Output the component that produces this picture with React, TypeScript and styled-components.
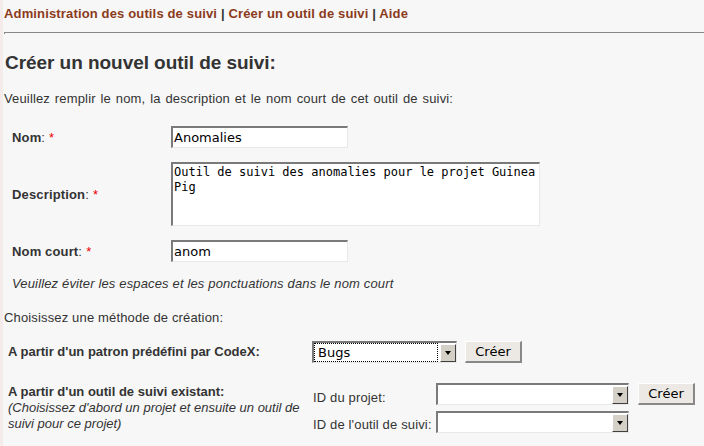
import React from "react";
import styled, { createGlobalStyle } from "styled-components";

const Global = createGlobalStyle`
  html, body { margin: 0; padding: 0; background: #f7f7f7; }
  body { font-family: "Liberation Sans", Arial, sans-serif; color: #333; letter-spacing: 0.15px; }
`;

const Page = styled.div`
  width: 704px;
  height: 446px;
  overflow: hidden;
  box-sizing: border-box;
  border-left: 3px solid #f5ebeb;
  padding: 4px 0 0 1px;
`;

const Nav = styled.div`
  font-size: 13px;
  font-weight: bold;
  color: #333;
  height: 20px;
  line-height: 20px;
`;

const NavLink = styled.a`
  color: #8b3b1c;
  text-decoration: none;
`;

const Rule = styled.hr`
  margin: 8px 0 0 0;
  border: 0;
  border-top: 1px solid #888;
  border-left: 1px solid #888;
  height: 1px;
`;

const Title = styled.h2`
  margin: 18px 0 0 1px;
  font-size: 19px;
  font-weight: bold;
  color: #333;
  line-height: 22px;
  letter-spacing: -0.05px;
`;

const Para = styled.p<{ $top: number; $wide?: boolean }>`
  margin: ${(p) => p.$top}px 0 0 0;
  font-size: 13px;
  line-height: 16px;
  color: #333;
  word-spacing: ${(p) => (p.$wide ? "1.1px" : "0")};
`;

const FormGrid = styled.div`
  display: grid;
  grid-template-columns: 159px auto;
  margin: 19px 0 0 8px;
  row-gap: 14px;
  align-items: center;
`;

const Label = styled.div`
  font-size: 13px;
  font-weight: bold;
  color: #333;
`;

const Req = styled.span`
  color: #e00;
  font-weight: normal;
  margin-left: 4px;
`;

const Colon = styled.span`
  font-weight: normal;
`;

const inset = `
  box-sizing: border-box;
  background: #fff;
  border-top: 2px solid #7a7a7a;
  border-left: 2px solid #7a7a7a;
  border-right: 1px solid #e8e8e8;
  border-bottom: 1px solid #e8e8e8;
  letter-spacing: 0;
`;

const TextBox = styled.div`
  ${inset}
  width: 177px;
  height: 22px;
  padding: 1px 0 0 1px;
  font-family: "DejaVu Sans", sans-serif;
  font-size: 13px;
  line-height: 17px;
  color: #000;
`;

const TextArea = styled.div`
  ${inset}
  width: 369px;
  height: 64px;
  padding: 1px 0 0 1px;
  font-family: "DejaVu Sans Mono", monospace;
  font-size: 12px;
  line-height: 15px;
  color: #000;
`;

const Note = styled.div`
  margin: 14px 0 0 8px;
  font-size: 13px;
  font-style: italic;
  color: #333;
`;

const MethodGrid = styled.div`
  display: grid;
  grid-template-columns: 304px auto;
  margin: 15px 0 0 4px;
  row-gap: 20px;
  align-items: center;
`;

const MethodLabel = styled.div`
  font-size: 13px;
  line-height: 16px;
  color: #333;
  letter-spacing: 0;
  b { font-weight: bold; }
  i { font-style: italic; }
`;

const Row = styled.div<{ $gap: number }>`
  display: flex;
  align-items: flex-start;
  gap: ${(p) => p.$gap}px;
`;

const SelectBox = styled.div<{ $w: number }>`
  ${inset}
  width: ${(p) => p.$w}px;
  height: 22px;
  display: flex;
  align-items: stretch;
  font-family: "DejaVu Sans", sans-serif;
  font-size: 13px;
  color: #000;
`;

const SelectText = styled.div<{ $focus?: boolean }>`
  flex: 1;
  padding-left: 3px;
  line-height: 17px;
  border: 1px ${(p) => (p.$focus ? "dotted #000" : "solid transparent")};
`;

const Arrow = styled.div`
  box-sizing: border-box;
  width: 16px;
  margin: 1px 0 0 2px;
  background: #d4d0c8;
  border-top: 1px solid #fff;
  border-left: 1px solid #fff;
  border-right: 1px solid #404040;
  border-bottom: 1px solid #404040;
  display: flex;
  align-items: center;
  justify-content: center;
  &::after {
    content: "";
    border-left: 3px solid transparent;
    border-right: 3px solid transparent;
    border-top: 4px solid #000;
  }
`;

const Button = styled.div`
  box-sizing: border-box;
  width: 57px;
  height: 22px;
  background: #ece9e4;
  border-top: 1px solid #fff;
  border-left: 1px solid #fff;
  border-right: 2px solid #888;
  border-bottom: 2px solid #888;
  font-family: "DejaVu Sans", sans-serif;
  font-size: 13px;
  line-height: 19px;
  text-align: center;
  color: #000;
  letter-spacing: 0;
`;

const SubGrid = styled.div`
  display: grid;
  grid-template-columns: 124px auto;
  row-gap: 6px;
  align-items: center;
  font-size: 13px;
  color: #333;
`;

const SubLabel = styled.span<{ $pad: number }>`
  padding-top: ${(p) => p.$pad}px;
  padding-left: 1px;
`;

export default function App() {
  return (
    <Page>
      <Global />
      <Nav>
        <NavLink>Administration des outils de suivi</NavLink> | <NavLink>Créer un outil de suivi</NavLink> |{" "}
        <NavLink>Aide</NavLink>
      </Nav>
      <Rule />
      <Title>Créer un nouvel outil de suivi:</Title>
      <Para $top={17} $wide>
        Veuillez remplir le nom, la description et le nom court de cet outil de suivi:
      </Para>
      <FormGrid>
        <Label>
          Nom<Colon>:</Colon>
          <Req>*</Req>
        </Label>
        <TextBox>Anomalies</TextBox>
        <Label>
          Description<Colon>:</Colon>
          <Req>*</Req>
        </Label>
        <TextArea>
          Outil de suivi des anomalies pour le projet Guinea
          <br />
          Pig
        </TextArea>
        <Label>
          Nom court<Colon>:</Colon>
          <Req>*</Req>
        </Label>
        <TextBox>anom</TextBox>
      </FormGrid>
      <Note>Veuillez éviter les espaces et les ponctuations dans le nom court</Note>
      <Para $top={19}>Choisissez une méthode de création:</Para>
      <MethodGrid>
        <MethodLabel>
          <b>A partir d'un patron prédéfini par CodeX:</b>
        </MethodLabel>
        <Row $gap={8}>
          <SelectBox $w={145}>
            <SelectText $focus>Bugs</SelectText>
            <Arrow />
          </SelectBox>
          <Button>Créer</Button>
        </Row>
        <MethodLabel>
          <b>A partir d'un outil de suivi existant:</b>
          <br />
          <i>(Choisissez d'abord un projet et ensuite un outil de</i>
          <br />
          <i>suivi pour ce projet)</i>
        </MethodLabel>
        <Row $gap={9}>
          <SubGrid>
            <SubLabel $pad={6}>ID du projet:</SubLabel>
            <SelectBox $w={193}>
              <SelectText />
              <Arrow />
            </SelectBox>
            <SubLabel $pad={4}>ID de l'outil de suivi:</SubLabel>
            <SelectBox $w={193}>
              <SelectText />
              <Arrow />
            </SelectBox>
          </SubGrid>
          <Button>Créer</Button>
        </Row>
      </MethodGrid>
    </Page>
  );
}
